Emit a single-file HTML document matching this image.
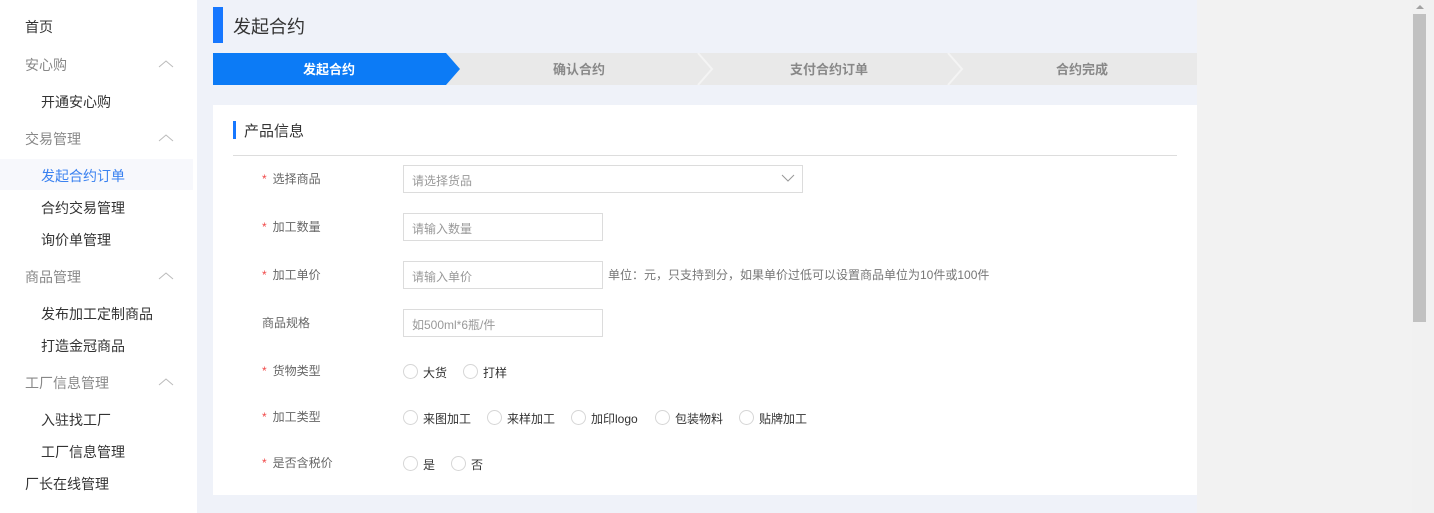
<!DOCTYPE html>
<html><head><meta charset="utf-8"><style>
*{margin:0;padding:0;box-sizing:border-box}
body{width:1434px;height:513px;overflow:hidden;background:#f2f2f2;font-family:"Liberation Sans","Noto Sans CJK SC",sans-serif;font-size:13px;color:#333;position:relative}
.side{position:absolute;left:0;top:0;width:197px;height:513px;background:#fff}
.side div{position:absolute;font-size:14px}
.g{color:#888;left:25px}
.c{color:#333;left:41px}
.t{color:#333;left:25px}
.chev{position:absolute;left:158px;width:16px;height:10px}
.main{position:absolute;left:197px;top:0;width:1000px;height:513px;background:#eff2f9}
.abs{position:absolute}
.lbl{position:absolute;left:262px;color:#666;font-size:12px}
.lbl b{color:#f04848;font-weight:normal;margin-right:6px}
.inp{position:absolute;left:403px;height:28px;border:1px solid #dcdcdc;color:#999;font-size:12px;padding:6px 8px;background:#fff}
.r{position:absolute;width:15px;height:15px;border:1px solid #d6d6d6;border-radius:50%;background:#fff}
.rt{position:absolute;font-size:12px;color:#333}
</style></head><body>
<div class="side">
<div class="t" style="top:17px">首页</div>
<div class="g" style="top:55px">安心购</div>
<svg class="chev" style="top:59px" viewBox="0 0 16 10"><path d="M1 8L8 2L15 8" fill="none" stroke="#bbb" stroke-width="1"/></svg>
<div class="c" style="top:92px">开通安心购</div>
<div class="g" style="top:129px">交易管理</div>
<svg class="chev" style="top:133px" viewBox="0 0 16 10"><path d="M1 8L8 2L15 8" fill="none" stroke="#bbb" stroke-width="1"/></svg>
<div style="left:0;top:159px;width:193px;height:31px;background:#f7f8fc"></div>
<div class="c" style="top:166px;color:#3b82f0">发起合约订单</div>
<div class="c" style="top:198px">合约交易管理</div>
<div class="c" style="top:230px">询价单管理</div>
<div class="g" style="top:267px">商品管理</div>
<svg class="chev" style="top:271px" viewBox="0 0 16 10"><path d="M1 8L8 2L15 8" fill="none" stroke="#bbb" stroke-width="1"/></svg>
<div class="c" style="top:304px">发布加工定制商品</div>
<div class="c" style="top:336px">打造金冠商品</div>
<div class="g" style="top:373px">工厂信息管理</div>
<svg class="chev" style="top:377px" viewBox="0 0 16 10"><path d="M1 8L8 2L15 8" fill="none" stroke="#bbb" stroke-width="1"/></svg>
<div class="c" style="top:410px">入驻找工厂</div>
<div class="c" style="top:442px">工厂信息管理</div>
<div class="t" style="top:474px">厂长在线管理</div>
</div>
<div class="main"></div>
<div class="abs" style="left:213px;top:7px;width:10px;height:36px;background:#1677ff"></div>
<div class="abs" style="left:233px;top:13px;font-size:18px;color:#333">发起合约</div>
<svg class="abs" style="left:213px;top:53px" width="984" height="32" viewBox="0 0 984 32">
<rect x="0" y="0" width="984" height="32" fill="#e9e9e9"/>
<path d="M0 0H233L247 16L233 32H0Z" fill="#0c7bf6"/>
<path d="M485 0L499 16L485 32" fill="none" stroke="#f4f4f4" stroke-width="2"/>
<path d="M735 0L749 16L735 32" fill="none" stroke="#f4f4f4" stroke-width="2"/>
<text x="116" y="21" text-anchor="middle" font-size="13" font-weight="bold" fill="#fff" font-family="Liberation Sans,Noto Sans CJK SC,sans-serif">发起合约</text>
<text x="366" y="21" text-anchor="middle" font-size="13" font-weight="bold" fill="#888" font-family="Liberation Sans,Noto Sans CJK SC,sans-serif">确认合约</text>
<text x="616" y="21" text-anchor="middle" font-size="13" font-weight="bold" fill="#888" font-family="Liberation Sans,Noto Sans CJK SC,sans-serif">支付合约订单</text>
<text x="869" y="21" text-anchor="middle" font-size="13" font-weight="bold" fill="#888" font-family="Liberation Sans,Noto Sans CJK SC,sans-serif">合约完成</text>
</svg>
<div class="abs" style="left:213px;top:105px;width:984px;height:390px;background:#fff"></div>
<div class="abs" style="left:233px;top:121px;width:3px;height:18px;background:#1677ff"></div>
<div class="abs" style="left:244px;top:120px;font-size:15px;color:#333">产品信息</div>
<div class="abs" style="left:233px;top:155px;width:944px;height:1px;background:#ddd"></div>
<div class="lbl" style="top:170px"><b>*</b>选择商品</div>
<div class="inp" style="top:165px;width:400px">请选择货品</div>
<svg class="abs" style="left:781px;top:174px" width="14" height="9" viewBox="0 0 14 9"><path d="M1 1L7 7L13 1" fill="none" stroke="#999" stroke-width="1"/></svg>
<div class="lbl" style="top:218px"><b>*</b>加工数量</div>
<div class="inp" style="top:213px;width:200px">请输入数量</div>
<div class="lbl" style="top:266px"><b>*</b>加工单价</div>
<div class="inp" style="top:261px;width:200px">请输入单价</div>
<div class="abs" style="left:608px;top:266px;font-size:12px;color:#777">单位：元，只支持到分，如果单价过低可以设置商品单位为10件或100件</div>
<div class="lbl" style="top:314px">商品规格</div>
<div class="inp" style="top:309px;width:200px">如500ml*6瓶/件</div>
<div class="lbl" style="top:362px"><b>*</b>货物类型</div>
<div class="r" style="left:403px;top:364px"></div><div class="rt" style="left:423px;top:364px">大货</div>
<div class="r" style="left:463px;top:364px"></div><div class="rt" style="left:483px;top:364px">打样</div>
<div class="lbl" style="top:408px"><b>*</b>加工类型</div>
<div class="r" style="left:403px;top:410px"></div><div class="rt" style="left:423px;top:410px">来图加工</div>
<div class="r" style="left:487px;top:410px"></div><div class="rt" style="left:507px;top:410px">来样加工</div>
<div class="r" style="left:571px;top:410px"></div><div class="rt" style="left:591px;top:410px">加印logo</div>
<div class="r" style="left:655px;top:410px"></div><div class="rt" style="left:675px;top:410px">包装物料</div>
<div class="r" style="left:739px;top:410px"></div><div class="rt" style="left:759px;top:410px">贴牌加工</div>
<div class="lbl" style="top:454px"><b>*</b>是否含税价</div>
<div class="r" style="left:403px;top:456px"></div><div class="rt" style="left:423px;top:456px">是</div>
<div class="r" style="left:451px;top:456px"></div><div class="rt" style="left:471px;top:456px">否</div>
<div class="abs" style="left:1412px;top:0;width:22px;height:513px;background:#f1f1f1"></div>
<svg class="abs" style="left:1414px;top:3px" width="12" height="8" viewBox="0 0 12 8"><path d="M2 6L6 2L10 6Z" fill="#a3a3a3"/></svg>
<div class="abs" style="left:1413px;top:14px;width:13px;height:308px;background:#c1c1c1"></div>
</body></html>
